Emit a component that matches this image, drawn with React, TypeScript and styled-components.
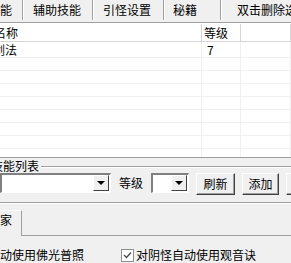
import React from 'react';
import styled, { createGlobalStyle } from 'styled-components';

const GlobalStyle = createGlobalStyle`
  html, body {
    margin: 0;
    padding: 0;
    background: #f0f0f0;
  }
  body {
    font-family: "Noto Sans CJK SC", "Noto Sans", sans-serif;
    font-size: 12px;
    color: #000;
  }
`;

const Window = styled.div`
  width: 291px;
  height: 263px;
  overflow: hidden;
  background: #f0f0f0;
  display: flex;
  flex-direction: column;
`;

const TabBar = styled.div`
  display: flex;
  height: 22px;
  border-bottom: 1px solid #a0a0a0;
  box-shadow: 0 1px 0 #ffffff;
  flex-shrink: 0;
`;

const Tab = styled.div<{ $w: number; $pad: number }>`
  width: ${(p) => p.$w}px;
  padding-left: ${(p) => p.$pad}px;
  box-sizing: border-box;
  line-height: 20px;
  white-space: nowrap;
  flex-shrink: 0;
  overflow: hidden;
`;

const TabSep = styled.div`
  width: 1px;
  height: 20px;
  background: #a0a0a0;
  border-right: 1px solid #ffffff;
  flex-shrink: 0;
`;

const List = styled.div`
  margin-top: 1px;
  height: 133px;
  background: #ffffff;
  border-bottom: 1px solid #a0a0a0;
  display: flex;
  flex-direction: column;
  flex-shrink: 0;
  overflow: hidden;
`;

const Row = styled.div<{ $h: number; $header?: boolean }>`
  display: grid;
  grid-template-columns: 202px 39px 1fr;
  height: ${(p) => p.$h}px;
  line-height: ${(p) => p.$h}px;
  border-bottom: 1px solid ${(p) => (p.$header ? '#d5d5d5' : '#f0f0f0')};
  flex-shrink: 0;
`;

/* $indent may be negative: the first column starts left of the visible area */
const Cell = styled.div<{ $header?: boolean; $indent?: number }>`
  text-indent: ${(p) => p.$indent ?? 5}px;
  border-right: 1px solid ${(p) => (p.$header ? '#d5d5d5' : '#f0f0f0')};
  white-space: nowrap;
  overflow: hidden;
`;

const Group = styled.div`
  margin-top: 8px;
  height: 35px;
  border-top: 1px solid #a0a0a0;
  border-bottom: 1px solid #a0a0a0;
  box-shadow: inset 0 1px 0 #ffffff, 0 1px 0 #ffffff;
  position: relative;
  flex-shrink: 0;
`;

const GroupLabel = styled.span`
  position: absolute;
  left: -9px;
  top: -8px;
  padding-right: 2px;
  background: #f0f0f0;
  line-height: 14px;
  white-space: nowrap;
`;

const Controls = styled.div`
  display: flex;
  align-items: flex-start;
  gap: 7px;
  margin-top: 6px;
  white-space: nowrap;
`;

const Combo = styled.div<{ $w: number }>`
  width: ${(p) => p.$w}px;
  height: 20px;
  box-sizing: border-box;
  background: #ffffff;
  border-top: 2px solid #808080;
  border-left: 2px solid #808080;
  border-right: 1px solid #ffffff;
  border-bottom: 1px solid #ffffff;
  display: flex;
  justify-content: flex-end;
  align-items: stretch;
  padding: 0 1px 1px 0;
  flex-shrink: 0;
`;

const ComboButton = styled.div`
  width: 16px;
  box-sizing: border-box;
  background: #f0f0f0;
  border: 1px solid;
  border-color: #ffffff #404040 #404040 #ffffff;
  display: flex;
  align-items: center;
  justify-content: center;
`;

const Arrow = styled.div`
  width: 0;
  height: 0;
  border-left: 4px solid transparent;
  border-right: 4px solid transparent;
  border-top: 4px solid #000;
`;

const Label = styled.span`
  margin: 0 1px;
  line-height: 20px;
`;

const Button = styled.div<{ $w: number }>`
  width: ${(p) => p.$w}px;
  height: 22px;
  box-sizing: border-box;
  background: #f0f0f0;
  border: 1px solid;
  border-color: #ffffff #404040 #404040 #ffffff;
  box-shadow: inset -1px -1px 0 #a0a0a0;
  line-height: 19px;
  text-align: center;
  flex-shrink: 0;
`;

const LowerTabs = styled.div`
  margin-top: 7px;
  height: 26px;
  display: flex;
  flex-shrink: 0;
`;

const LowerTab = styled.div`
  width: 22px;
  box-sizing: border-box;
  border-top: 1px solid #ffffff;
  border-right: 1px solid #a0a0a0;
  padding-top: 1px;
  line-height: 16px;
  white-space: nowrap;
  overflow: hidden;
`;

const TabFiller = styled.div`
  flex: 1;
  border-bottom: 1px solid #a0a0a0;
`;

const Checks = styled.div`
  display: flex;
  align-items: center;
  margin-top: 12px;
  line-height: 14px;
  white-space: nowrap;
`;

const CheckItem = styled.label<{ $w?: number }>`
  display: flex;
  align-items: center;
  gap: 2px;
  width: ${(p) => (p.$w ? `${p.$w}px` : 'auto')};
  flex-shrink: 0;
`;

const Box = styled.span`
  width: 13px;
  height: 13px;
  box-sizing: border-box;
  background: #ffffff;
  border: 1px solid #8e8f8f;
  display: flex;
  align-items: center;
  justify-content: center;
`;

const Tick = () => (
  <svg width="9" height="9" viewBox="0 0 9 9">
    <path d="M1 4 L3.5 6.5 L8 1.5" fill="none" stroke="#4a4a4a" strokeWidth="1.4" />
  </svg>
);

export default function App() {
  return (
    <>
      <GlobalStyle />
      <Window>
        <TabBar>
          <Tab $w={22} $pad={0}>能</Tab>
          <TabSep />
          <Tab $w={68} $pad={9}>辅助技能</Tab>
          <TabSep />
          <Tab $w={69} $pad={9}>引怪设置</Tab>
          <TabSep />
          <Tab $w={55} $pad={8}>秘籍</Tab>
          <TabSep />
          <Tab $w={80} $pad={15}>双击删除选项</Tab>
        </TabBar>
        <List>
          <Row $h={17} $header>
            <Cell $header $indent={-6}>名称</Cell>
            <Cell $header $indent={2}>等级</Cell>
            <Cell $header />
          </Row>
          <Row $h={15}>
            <Cell $indent={-7}>剑法</Cell>
            <Cell $indent={5}>7</Cell>
            <Cell />
          </Row>
          {Array.from({ length: 8 }).map((_, i) => (
            <Row key={i} $h={12}>
              <Cell />
              <Cell />
              <Cell />
            </Row>
          ))}
        </List>
        <Group>
          <GroupLabel>技能列表</GroupLabel>
          <Controls>
            <Combo $w={111}>
              <ComboButton>
                <Arrow />
              </ComboButton>
            </Combo>
            <Label>等级</Label>
            <Combo $w={38}>
              <ComboButton>
                <Arrow />
              </ComboButton>
            </Combo>
            <Button $w={39}>刷新</Button>
            <Button $w={37}>添加</Button>
            <Button $w={37}>删除</Button>
          </Controls>
        </Group>
        <LowerTabs>
          <LowerTab>家</LowerTab>
          <TabFiller />
        </LowerTabs>
        <Checks>
          <CheckItem $w={121}>动使用佛光普照</CheckItem>
          <CheckItem>
            <Box>
              <Tick />
            </Box>
            对阴怪自动使用观音诀
          </CheckItem>
        </Checks>
      </Window>
    </>
  );
}
